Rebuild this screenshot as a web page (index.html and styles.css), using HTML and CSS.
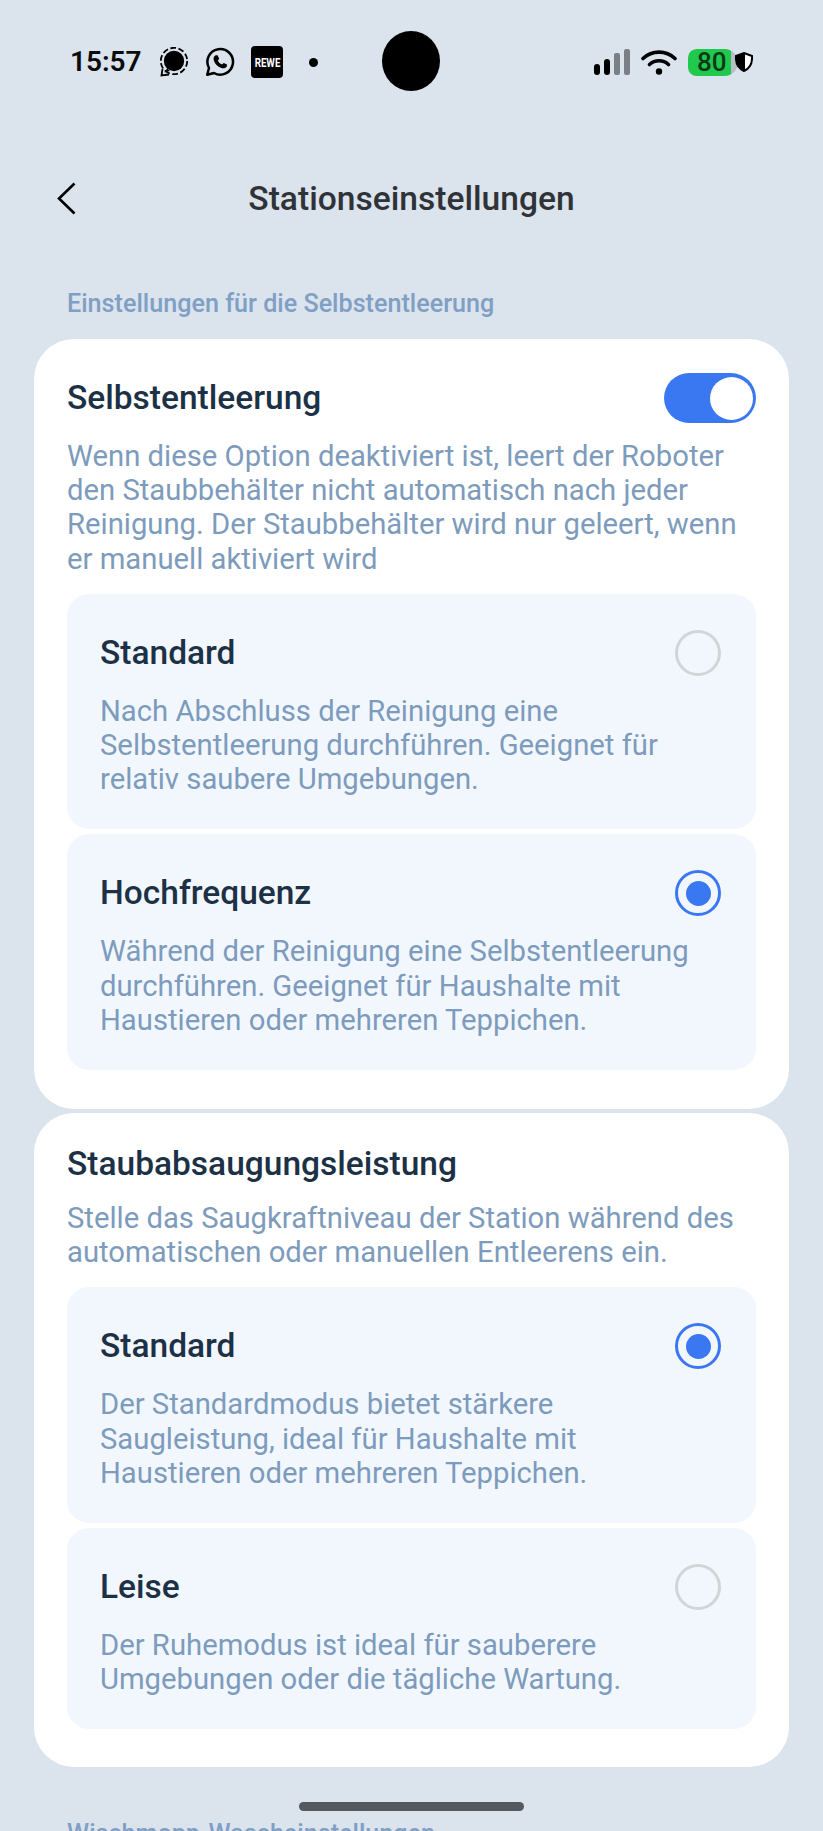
FILE: index.html
```html
<!DOCTYPE html>
<html lang="de">
<head>
<meta charset="utf-8">
<title>Stationseinstellungen</title>
<link rel="stylesheet" href="styles.css">
</head>
<body>
<div class="screen">
  <div class="camera"></div>
  <div class="status">
    <span class="time">15:57</span>
    <svg class="ic-signal" width="30" height="30" viewBox="0 0 30 30"><circle cx="15" cy="14" r="10.200" fill="#000"/><circle cx="15" cy="14" r="13.200" fill="none" stroke="#000" stroke-width="1.800" stroke-dasharray="5.800 2.500"/><path d="M8 21.500 L5.500 25.500 L11 24 Z" fill="#000"/><path d="M3.500 22 L2.500 28.500 L10 27.500" fill="none" stroke="#000" stroke-width="1.800"/></svg>
    <svg class="ic-wa" width="30" height="30" viewBox="0 0 30 30"><path d="M2.2 27.8 L4 21 A12.8 12.8 0 1 1 9 26 Z" fill="none" stroke="#000" stroke-width="2.5" stroke-linejoin="round"/><path d="M10.8 8.2 L12.6 8.2 L14.2 11.8 L12.8 13.6 C13.6 15.4 15 16.8 17 17.6 L18.8 15.9 L22 17.6 L21.8 19.6 C20.6 21.4 18.4 21.8 16 20.8 C12.6 19.4 10 16.8 8.8 13.4 C8 11.2 9 9 10.8 8.2 Z" fill="#000"/></svg>
    <span class="rewe"><span class="rewe-text">REWE</span></span>
    <span class="dot"></span>
    <div class="status-right">
      <svg width="36" height="26" viewBox="0 0 36 26"><rect x="0" y="15" width="6" height="11" rx="3" fill="#000"/><rect x="10" y="10" width="6" height="16" rx="3" fill="#000"/><rect x="20" y="4" width="6" height="22" rx="2" fill="#7b7f86"/><rect x="30" y="0" width="6" height="26" rx="2" fill="#7b7f86"/></svg>
      <svg class="ic-wifi" width="36" height="26" viewBox="0 0 36 26"><path d="M2 9.500 C11 1 25 1 34 9.500" fill="none" stroke="#000" stroke-width="3.600" stroke-linecap="round"/><path d="M8.500 15.500 C14 10.500 22 10.500 27.500 15.500" fill="none" stroke="#000" stroke-width="3.600" stroke-linecap="round"/><circle cx="18" cy="22.500" r="3.200" fill="#000"/></svg>
      <div class="battery">80</div>
      <svg class="ic-shield" width="18" height="20" viewBox="0 0 18 20"><path d="M9 1 L17 4 C17.500 11 14.500 16.500 9 19 C3.500 16.500 0.500 11 1 4 Z" fill="#fff" stroke="#000" stroke-width="2"/><path d="M10 1 L1 4 C0.500 11 3.500 16.500 10 19 Z" fill="#000"/></svg>
    </div>
  </div>

  <header class="nav">
    <svg class="back" width="19" height="33" viewBox="0 0 19 33"><path d="M17.500 1.500 L2 16.500 L17.500 31.500" fill="none" stroke="#000" stroke-width="2.600"/></svg>
    <h1 class="title">Stationseinstellungen</h1>
  </header>

  <h2 class="section">Einstellungen für die Selbstentleerung</h2>

  <section class="card">
    <div class="card-head">
      <h3 class="card-title">Selbstentleerung</h3>
      <span class="toggle"><span class="knob"></span></span>
    </div>
    <p class="text card-text">Wenn diese Option deaktiviert ist, leert der Roboter den Staubbehälter nicht automatisch nach jeder Reinigung. Der Staubbehälter wird nur geleert, wenn er manuell aktiviert wird</p>
    <div class="options">
      <div class="option">
        <div class="option-head"><h4 class="option-title">Standard</h4><span class="radio"></span></div>
        <p class="text">Nach Abschluss der Reinigung eine Selbstentleerung durchführen. Geeignet für relativ saubere Umgebungen.</p>
      </div>
      <div class="option">
        <div class="option-head"><h4 class="option-title">Hochfrequenz</h4><span class="radio on"></span></div>
        <p class="text">Während der Reinigung eine Selbstentleerung durchführen. Geeignet für Haushalte mit Haustieren oder mehreren Teppichen.</p>
      </div>
    </div>
  </section>

  <section class="card card-second">
    <h3 class="card-title">Staubabsaugungsleistung</h3>
    <p class="text card-text">Stelle das Saugkraftniveau der Station während des automatischen oder manuellen Entleerens ein.</p>
    <div class="options">
      <div class="option">
        <div class="option-head"><h4 class="option-title">Standard</h4><span class="radio on"></span></div>
        <p class="text">Der Standardmodus bietet stärkere Saugleistung, ideal für Haushalte mit Haustieren oder mehreren Teppichen.</p>
      </div>
      <div class="option">
        <div class="option-head"><h4 class="option-title">Leise</h4><span class="radio"></span></div>
        <p class="text">Der Ruhemodus ist ideal für sauberere Umgebungen oder die tägliche Wartung.</p>
      </div>
    </div>
  </section>

  <h2 class="section section-next">Wischmopp-Wascheinstellungen</h2>
  <div class="home-bar"></div>
</div>
</body>
</html>
```

FILE: styles.css
```css
* { box-sizing: border-box; }
html, body { margin: 0; padding: 0; }
body { background: #dbe3ed; font-family: Roboto, "Liberation Sans", sans-serif; }
h1, h2, h3, h4, p { margin: 0; font-weight: 500; }
.screen { position: relative; width: 823px; height: 1831px; overflow: hidden; background: #dbe3ed; }

.camera { position: absolute; left: 382px; top: 31px; width: 58px; height: 60px; border-radius: 50%; background: #000; }
.status { display: flex; align-items: center; height: 30px; margin: 47px 0 0; padding: 0 70px; }
.time { font-size: 28px; font-weight: 600; color: #0c0c0c; line-height: 30px; width: 89px; }
.ic-wa { margin-left: 16px; }
.rewe { display: flex; align-items: center; justify-content: center; width: 32px; height: 32px; margin-left: 16px; border-radius: 4px; background: #000; }
.rewe-text { color: #fff; font-size: 12.500px; font-weight: 700; transform: scaleX(0.78); }
.dot { width: 9px; height: 9px; margin-left: 26px; border-radius: 50%; background: #000; }
.status-right { display: flex; align-items: center; margin-left: auto; }
.ic-wifi { margin-left: 11px; }
.battery { width: 50px; height: 27px; margin-left: 11px; padding-left: 9px; border-radius: 9px 14px 14px 9px; background: linear-gradient(to right, #20c94e 43px, #b9bec5 43px); color: #0a3a17; font-size: 26px; font-weight: 500; line-height: 27px; }
.ic-shield { position: relative; margin-left: -3px; }

.nav { position: relative; display: flex; justify-content: center; align-items: center; height: 40px; margin-top: 102px; }
.back { position: absolute; left: 57px; top: 3px; }
.title { font-size: 33.600px; line-height: 40px; color: #2f3338; }

.section { margin: 69px 0 0 67px; font-size: 25.150px; line-height: 32px; color: #7f9fc4; }

.card { margin: 19px 34px 0; padding: 33px 33px 39px; border-radius: 40px; background: #fff; }
.card-second { margin-top: 4px; padding-top: 31px; padding-bottom: 38px; }
.card-head { display: flex; justify-content: space-between; align-items: center; height: 52px; }
.card-title { font-size: 33.500px; line-height: 40px; color: #1c3145; }
.text { font-size: 29.250px; line-height: 34.200px; font-weight: 400; color: #7d9bbc; }
.card-text { margin-top: 15px; }
.card-second .card-text { margin-top: 17px; }
.options { display: flex; flex-direction: column; gap: 5px; margin-top: 18px; }
.option { padding: 34px 33px 33px; border-radius: 22px; background: #f2f7fe; }
.option-head { display: flex; justify-content: space-between; align-items: center; height: 50px; margin-bottom: 16px; }
.option-title { font-size: 33.500px; line-height: 40px; color: #1c3145; }

.toggle { display: flex; justify-content: flex-end; align-items: center; width: 92px; height: 50px; padding-right: 3px; border-radius: 25px; background: #3a78f2; }
.knob { width: 43px; height: 43px; border-radius: 50%; background: #fff; }
.radio { display: flex; align-items: center; justify-content: center; width: 46px; height: 46px; margin-right: 2px; border: 3px solid #d0d5d8; border-radius: 50%; }
.radio.on { border-color: #3a78f2; }
.radio.on::after { content: ""; width: 25px; height: 25px; border-radius: 50%; background: #3a78f2; }

.section-next { margin-top: 51px; }
.home-bar { position: absolute; left: 299px; top: 1802px; width: 225px; height: 9px; border-radius: 5px; background: #55585e; }
```
